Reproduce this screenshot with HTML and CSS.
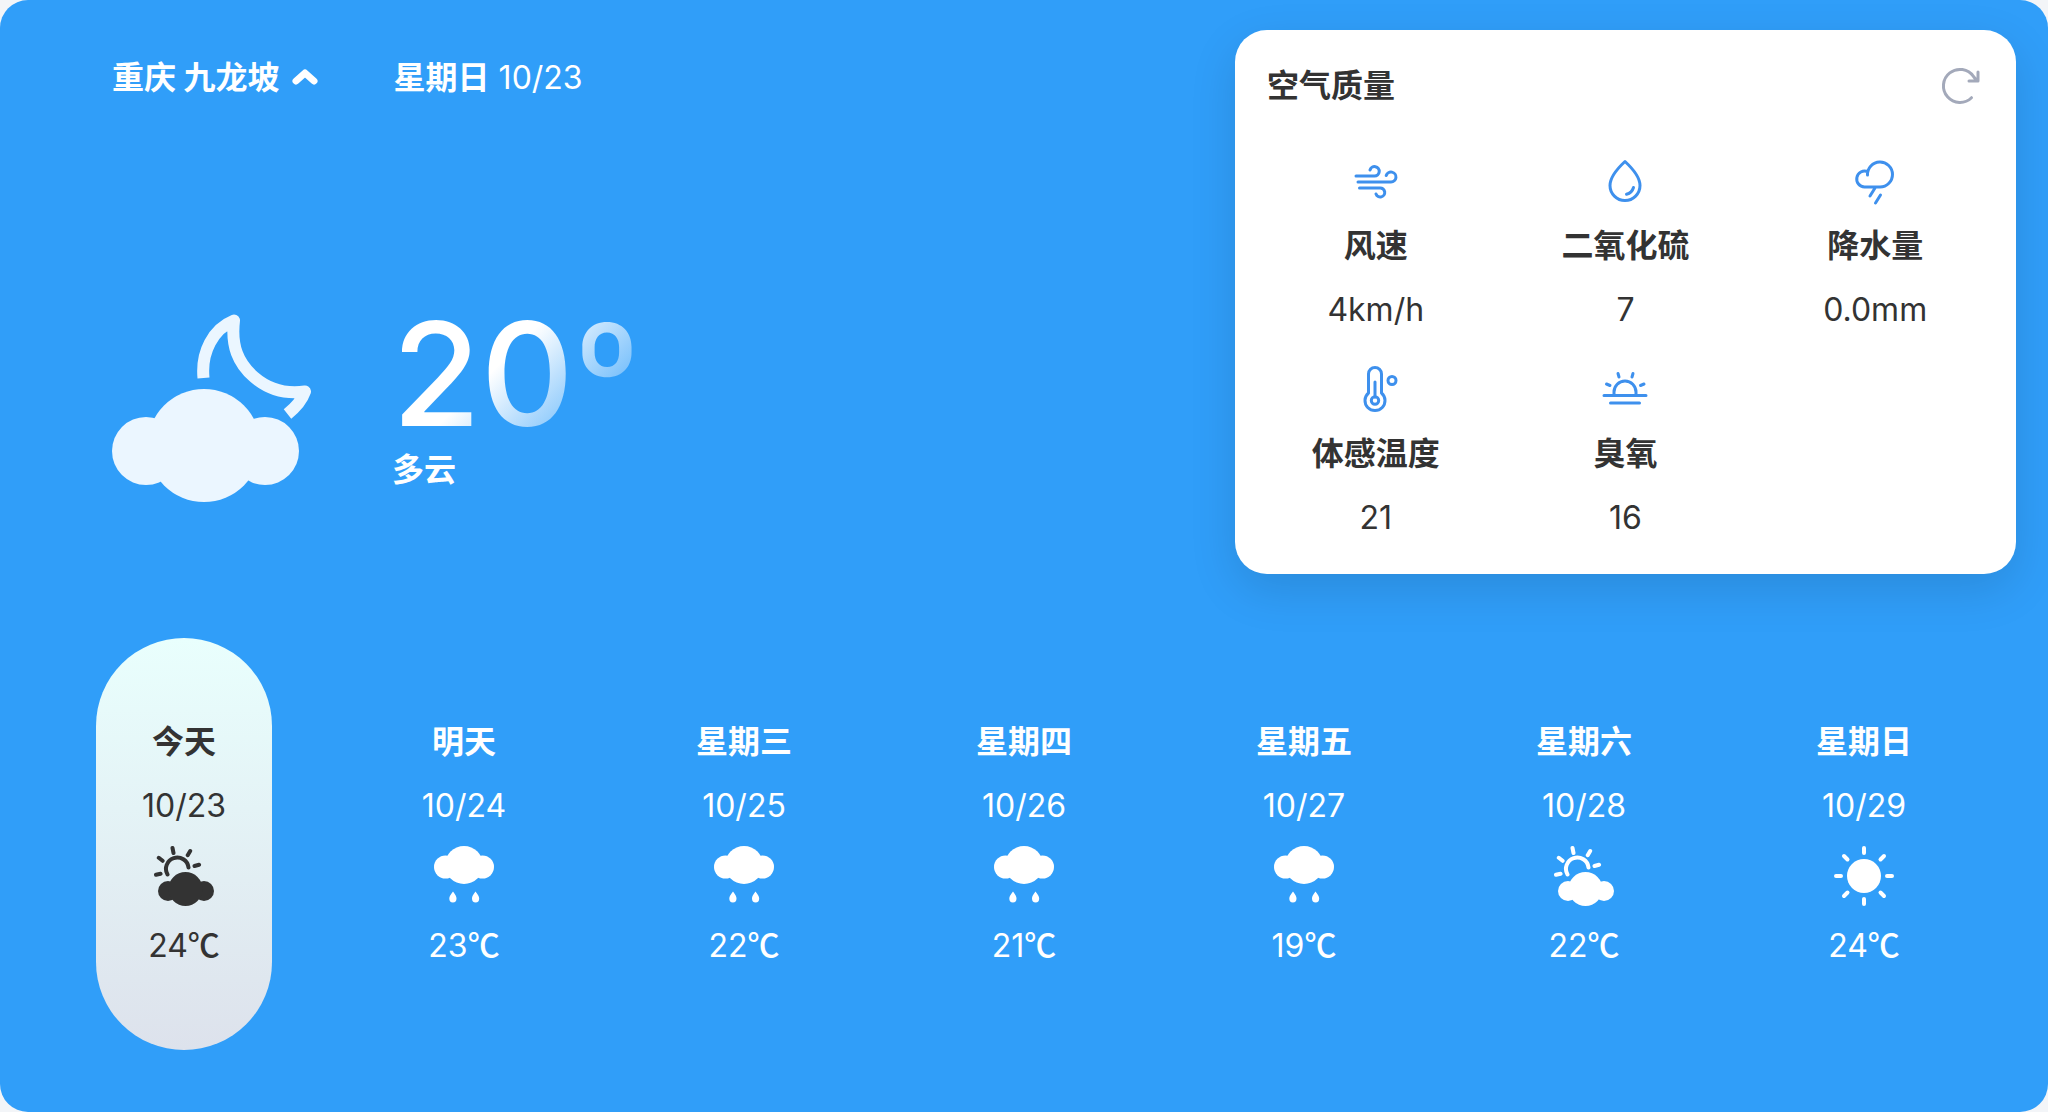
FILE: index.html
```html
<!DOCTYPE html>
<html lang="zh-CN">
<head>
<meta charset="utf-8">
<meta name="viewport" content="width=device-width, initial-scale=1">
<title>天气</title>
<link rel="stylesheet" href="styles.css">
</head>
<body>
<svg class="sprite" aria-hidden="true">
  <symbol id="rain" viewBox="0 1 60 60">
    <circle cx="11.500" cy="22" r="11.500"/><circle cx="48.500" cy="22" r="11.500"/><circle cx="30" cy="20" r="19"/><rect x="11" y="12" width="38" height="20"/>
    <path d="M19 46.500c2.500 3.200 3.500 5 3.500 7a3.600 3.900 0 0 1-7.200 0c0-2 1.200-3.800 3.700-7zM41.500 46.500c2.500 3.200 3.700 5 3.700 7a3.600 3.900 0 0 1-7.200 0c0-2 1-3.800 3.500-7z"/>
  </symbol>
  <symbol id="partly" viewBox="0 0 60 60">
    <circle cx="14" cy="45" r="10"/><circle cx="50" cy="45" r="10"/><circle cx="31.500" cy="43" r="17"/>
    <path d="M13.500 28.500A11.300 11.300 0 1 1 34.500 21.500M18.500 2l1 5M36.200 5l-2.500 4.200M40.500 20l4.600-1.200M4.800 11.800l3.800 3M2 28.800l4.600-1" fill="none" stroke="currentColor" stroke-width="4" stroke-linecap="round"/>
  </symbol>
  <symbol id="sunny" viewBox="0 0 60 60">
    <circle cx="30" cy="30" r="17"/>
    <path d="M30 2v5M30 53v5M2 30h5M53 30h5M10 10l3.500 3.500M46.500 46.500l3.500 3.500M50 10l-3.500 3.500M13.500 46.500l-3.500 3.500" fill="none" stroke="currentColor" stroke-width="4" stroke-linecap="round"/>
  </symbol>
</svg>
<main class="weather">
  <section class="overview">
    <div class="current">
      <header class="topbar">
        <button class="city" type="button">重庆 九龙坡
          <svg class="chevron" viewBox="0 0 26 20" aria-hidden="true"><path d="M4 13l9-8 9 8"/></svg>
        </button>
        <p class="date"><strong>星期日</strong> 10/23</p>
      </header>
      <div class="now">
        <svg class="now-icon" viewBox="0 0 200 200" role="img" aria-label="多云">
          <circle cx="34" cy="141" r="34"/><circle cx="153" cy="141" r="34"/><circle cx="92" cy="135.500" r="56.500"/><rect x="34" y="125" width="119" height="40"/>
          <path class="moon" d="M91.500 68C89 42 101 19 122 10.500C119 36 126 53 142 67C157 80 175 84 193 81.500C190 90 183 98 175.500 104"/>
        </svg>
        <div class="now-text">
          <p class="now-temp">20º</p>
          <p class="now-name">多云</p>
        </div>
      </div>
    </div>
    <section class="air">
      <header class="air-head">
        <h2>空气质量</h2>
        <button class="refresh" type="button" aria-label="刷新">
          <svg viewBox="0 0 40 40" aria-hidden="true"><path d="M31.500 31.700A16.500 16.500 0 1 1 33.500 10.500L37 15M38 6v9h-9"/></svg>
        </button>
      </header>
      <dl class="metrics">
        <div class="metric">
          <svg viewBox="0 1 48 48" aria-hidden="true"><path d="M4 19h18.500a4.700 4.700 0 1 0-4.500-6M6 25h33a5 5 0 1 0-4.800-6.500M7.500 31h20.500a4.500 4.500 0 1 1-4 6"/></svg>
          <dt>风速</dt><dd>4km/h</dd>
        </div>
        <div class="metric">
          <svg viewBox="0 1 48 48" aria-hidden="true"><path d="M24 4.500C31 11 39 20 39 28.500A15 15 0 0 1 9 28.500C9 20 17 11 24 4.500zM32.500 30.500c-1 3.500-3.500 5.800-7 6.800"/></svg>
          <dt>二氧化硫</dt><dd>7</dd>
        </div>
        <div class="metric">
          <svg viewBox="0 1 48 48" aria-hidden="true"><path d="M16.500 18A12.500 12.500 0 1 1 29 30H13.500A8 8 0 1 1 16.500 14.500V18M24 31l-5 8M29.500 38l-5 8"/></svg>
          <dt>降水量</dt><dd>0.0mm</dd>
        </div>
        <div class="metric">
          <svg viewBox="0 1 48 48" aria-hidden="true"><path d="M16.500 28V9a6.500 6.500 0 0 1 13 0V28a10 10 0 1 1-13 0zM23 17v15"/><circle cx="23" cy="35.500" r="3.700"/><circle cx="40" cy="15.500" r="4"/></svg>
          <dt>体感温度</dt><dd>21</dd>
        </div>
        <div class="metric">
          <svg viewBox="0 1 48 48" aria-hidden="true"><path d="M13 29V27a11 11 0 0 1 22 0V29M3 30.500h42M9.500 38h29M17 8.500l1 3.500M32 8.500l-1 3.500M5.500 19l3.500 1.500M43 19l-3.500 1.500"/></svg>
          <dt>臭氧</dt><dd>16</dd>
        </div>
      </dl>
    </section>
  </section>
  <ul class="forecast">
    <li class="day today"><strong>今天</strong><span>10/23</span><svg><use href="#partly"/></svg><span>24<span class="unit">℃</span></span></li>
    <li class="day"><strong>明天</strong><span>10/24</span><svg><use href="#rain"/></svg><span>23<span class="unit">℃</span></span></li>
    <li class="day"><strong>星期三</strong><span>10/25</span><svg><use href="#rain"/></svg><span>22<span class="unit">℃</span></span></li>
    <li class="day"><strong>星期四</strong><span>10/26</span><svg><use href="#rain"/></svg><span>21<span class="unit">℃</span></span></li>
    <li class="day"><strong>星期五</strong><span>10/27</span><svg><use href="#rain"/></svg><span>19<span class="unit">℃</span></span></li>
    <li class="day"><strong>星期六</strong><span>10/28</span><svg><use href="#partly"/></svg><span>22<span class="unit">℃</span></span></li>
    <li class="day"><strong>星期日</strong><span>10/29</span><svg><use href="#sunny"/></svg><span>24<span class="unit">℃</span></span></li>
  </ul>
</main>
</body>
</html>
```
FILE: styles.css
```css
* {
  box-sizing: border-box;
  margin: 0;
  padding: 0;
}

body {
  background: #f3f5f8;
  font: 32px/48px Inter, "Noto Sans CJK SC", sans-serif;
  color: #333;
}

strong {
  font-weight: 700;
}

button {
  border: 0;
  background: none;
  color: inherit;
  font: inherit;
  cursor: pointer;
}

.sprite {
  display: none;
}

.weather {
  display: flex;
  flex-direction: column;
  gap: 64px;
  min-height: 100vh;
  padding: 30px 32px 62px;
  border-radius: 28px;
  background: #309ef9;
  color: #fff;
}

.overview {
  display: grid;
  grid-template-columns: minmax(0, 77fr) minmax(0, 50fr);
}

.current {
  padding: 24px 80px 0;
}

.topbar {
  display: flex;
  gap: 76px;
}

.city {
  display: flex;
  align-items: center;
  gap: 12px;
  font-weight: 700;
}

.chevron {
  width: 26px;
  height: 20px;
  fill: none;
  stroke: currentColor;
  stroke-width: 7;
  stroke-linecap: round;
  stroke-linejoin: round;
}

.now {
  display: flex;
  gap: 80px;
  padding-top: 208px;
}

.now-icon {
  width: 200px;
  height: 200px;
  fill: #ebf6ff;
}

.now-icon .moon {
  fill: none;
  stroke: #ebf6ff;
  stroke-width: 12;
  stroke-linejoin: round;
}

.now-temp {
  width: max-content;
  margin-bottom: 8px;
  font-size: 144px;
  font-weight: 500;
  line-height: 128px;
  background: linear-gradient(135deg, #fff 43%, #309ef9);
  background-clip: text;
  -webkit-background-clip: text;
  color: transparent;
}

.now-name {
  font-weight: 700;
}

.air {
  padding: 32px 16px;
  border-radius: 32px;
  background: #fff;
  box-shadow: 0 16px 48px rgba(0, 0, 0, 0.12);
  color: #333;
}

.air-head {
  display: flex;
  justify-content: space-between;
  align-items: center;
  padding: 0 20px 0 16px;
}

.air-head h2 {
  font-size: 32px;
  font-weight: 700;
}

.refresh {
  display: flex;
}

.refresh svg {
  width: 40px;
  height: 40px;
  fill: none;
  stroke: #a3a9ba;
  stroke-width: 3;
  stroke-linecap: round;
  stroke-linejoin: round;
}

.metrics {
  display: grid;
  grid-template-columns: repeat(3, minmax(0, 1fr));
  gap: 32px 0;
  padding-top: 48px;
}

.metric {
  display: flex;
  flex-direction: column;
  align-items: center;
  gap: 16px;
}

.metric svg {
  width: 48px;
  height: 48px;
  fill: none;
  stroke: #3e90ed;
  stroke-width: 3;
  stroke-linecap: round;
  stroke-linejoin: round;
}

.metric dt {
  font-weight: 700;
}

.forecast {
  display: flex;
  justify-content: space-between;
  padding: 0 64px;
  list-style: none;
}

.day {
  display: flex;
  flex-direction: column;
  align-items: center;
  gap: 16px;
  width: 176px;
  padding: 80px 0;
  border-radius: 88px;
}

.day svg {
  width: 60px;
  height: 60px;
  fill: currentColor;
}

.unit {
  font-family: "Noto Sans CJK SC", sans-serif;
  font-weight: 500;
  line-height: 1;
}

.today {
  background: linear-gradient(#e9fffd, #dde2ec);
  color: #333;
}
```
